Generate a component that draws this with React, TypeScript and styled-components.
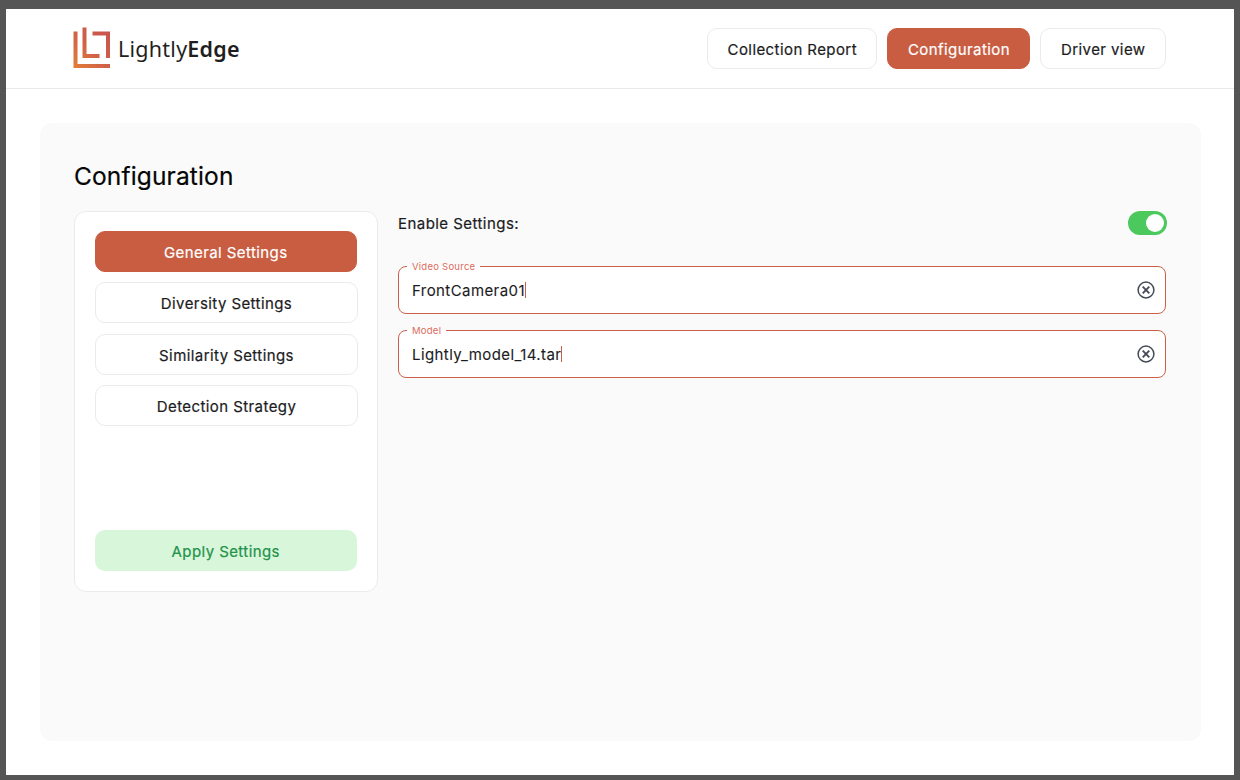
import styled, { createGlobalStyle } from "styled-components";

const navItems = ["Collection Report", "Configuration", "Driver view"];
const settingsItems = [
  "General Settings",
  "Diversity Settings",
  "Similarity Settings",
  "Detection Strategy",
];
const fields = [
  { label: "Video Source", value: "FrontCamera01" },
  { label: "Model", value: "Lightly_model_14.tar" },
];

function Logo() {
  return (
    <svg width="38" height="42" viewBox="0 0 38 42" fill="none">
      <defs>
        <linearGradient id="logoFill" x1="0" y1="1" x2="1" y2="0">
          <stop offset="0" stopColor="#e47f36" />
          <stop offset="0.5" stopColor="#cf5f48" />
          <stop offset="1" stopColor="#c9524e" />
        </linearGradient>
      </defs>
      <path
        d="M0.5 4.5H4.5V37H37V41H0.5ZM9.5 0.5H13.5V27H26.5V31H9.5ZM19.5 4.5H37V31H33V8.5H19.5Z"
        fill="url(#logoFill)"
      />
    </svg>
  );
}

function ClearIcon() {
  return (
    <svg width="18" height="18" viewBox="0 0 18 18" fill="none" stroke="#454b57">
      <circle cx="9" cy="9" r="7.9" strokeWidth="1.5" />
      <path d="M5.7 5.7L12.3 12.3M12.3 5.7L5.7 12.3" strokeWidth="1.9" />
    </svg>
  );
}

export default function App() {
  return (
    <Frame>
      <GlobalStyle />
      <Page>
        <Header>
          <Brand>
            <Logo />
            <BrandName>
              Lightly<strong>Edge</strong>
            </BrandName>
          </Brand>
          <Nav>
            {navItems.map((item) => (
              <NavButton key={item} $active={item === "Configuration"}>
                {item}
              </NavButton>
            ))}
          </Nav>
        </Header>
        <Main>
          <Panel>
            <Title>Configuration</Title>
            <Columns>
              <Sidebar>
                <SettingsList>
                  {settingsItems.map((item) => (
                    <SettingsButton key={item} $active={item === "General Settings"}>
                      {item}
                    </SettingsButton>
                  ))}
                </SettingsList>
                <ApplyButton>Apply Settings</ApplyButton>
              </Sidebar>
              <Content>
                <EnableRow>
                  <EnableLabel>Enable Settings:</EnableLabel>
                  <Toggle>
                    <Knob />
                  </Toggle>
                </EnableRow>
                <FieldList>
                  {fields.map((field) => (
                    <Field key={field.label}>
                      <Legend>{field.label}</Legend>
                      <FieldValue>
                        {field.value}
                        <Caret />
                      </FieldValue>
                      <ClearIcon />
                    </Field>
                  ))}
                </FieldList>
              </Content>
            </Columns>
          </Panel>
        </Main>
      </Page>
    </Frame>
  );
}

const GlobalStyle = createGlobalStyle`
  html, body {
    margin: 0;
    height: 100%;
    background: #555555;
  }
  * {
    box-sizing: border-box;
  }
  body {
    font-family: Inter, "Liberation Sans", sans-serif;
    color: #1c1c1e;
  }
`;

const Frame = styled.div`
  height: 780px;
  padding: 9px 6px 5px;
  background: #555555;
`;

const Page = styled.div`
  display: flex;
  flex-direction: column;
  height: 100%;
  background: #ffffff;
`;

const Header = styled.header`
  display: flex;
  align-items: center;
  justify-content: space-between;
  flex: 0 0 80px;
  padding: 0 68px 1px 67px;
  border-bottom: 1px solid #e8e8e8;
`;

const Brand = styled.div`
  display: flex;
  align-items: center;
  gap: 7px;
`;

const BrandName = styled.span`
  font-family: "Noto Sans", sans-serif;
  font-size: 21.5px;
  letter-spacing: 0.25px;
  color: #1f1f22;

  strong {
    font-weight: 600;
  }
`;

const Nav = styled.nav`
  display: flex;
  gap: 10px;
`;

const NavButton = styled.button<{ $active?: boolean }>`
  height: 41px;
  padding: 2px 19.5px 0;
  border: 1px solid ${(p) => (p.$active ? "#c95d41" : "#ebebeb")};
  border-radius: 10px;
  background: ${(p) => (p.$active ? "#c95d41" : "#ffffff")};
  color: ${(p) => (p.$active ? "#ffffff" : "#1c1c1e")};
  font-family: inherit;
  font-size: 15px;
  font-weight: 400;
  letter-spacing: 0.42px;
  -webkit-text-stroke: 0.2px currentColor;
`;

const Main = styled.main`
  flex: 1;
  display: flex;
  padding: 34px 33px 34px 34px;
`;

const Panel = styled.section`
  flex: 1;
  padding: 34px 35px 34px 34px;
  border-radius: 12px;
  background: #fafafa;
`;

const Title = styled.h1`
  margin: 0 0 17px;
  height: 37px;
  font-size: 24.5px;
  line-height: 39px;
  font-weight: 400;
  letter-spacing: 0.14px;
  color: #050505;
  -webkit-text-stroke: 0.2px currentColor;
`;

const Columns = styled.div`
  display: flex;
  align-items: flex-start;
  gap: 20px;
`;

const Sidebar = styled.aside`
  display: flex;
  flex-direction: column;
  justify-content: space-between;
  flex: 0 0 304px;
  height: 381px;
  padding: 19px 19px 20px 19.5px;
  border: 1px solid #ebebeb;
  border-radius: 12px;
  background: #ffffff;
`;

const SettingsList = styled.div`
  display: flex;
  flex-direction: column;
  gap: 10.4px;
`;

const SettingsButton = styled.button<{ $active?: boolean }>`
  height: 41px;
  margin: ${(p) => (p.$active ? "0 1px 0 0" : "0 0 0 0.5px")};
  padding-top: 3px;
  border: 1px solid ${(p) => (p.$active ? "#c95d41" : "#ebebeb")};
  border-radius: 10px;
  background: ${(p) => (p.$active ? "#c95d41" : "#ffffff")};
  color: ${(p) => (p.$active ? "#ffffff" : "#1c1c1e")};
  font-family: inherit;
  font-size: 15px;
  font-weight: 400;
  letter-spacing: 0.42px;
  -webkit-text-stroke: 0.2px currentColor;
`;

const ApplyButton = styled.button`
  height: 41px;
  margin-right: 1px;
  padding-top: 2px;
  border: none;
  border-radius: 10px;
  background: #d7f6da;
  color: #24924a;
  font-family: inherit;
  font-size: 15px;
  font-weight: 400;
  letter-spacing: 0.42px;
  -webkit-text-stroke: 0.2px currentColor;
`;

const Content = styled.div`
  flex: 1;
  min-width: 0;
`;

const EnableRow = styled.div`
  display: flex;
  align-items: center;
  justify-content: space-between;
  height: 23px;
  margin-bottom: 32px;
`;

const EnableLabel = styled.span`
  padding-top: 2px;
  font-size: 15px;
  font-weight: 400;
  letter-spacing: 0.45px;
  -webkit-text-stroke: 0.2px currentColor;
`;

const Toggle = styled.div`
  display: flex;
  align-items: center;
  justify-content: flex-end;
  flex: none;
  width: 39px;
  height: 24px;
  margin-right: -1px;
  padding-right: 3px;
  border-radius: 12px;
  background: #4bc95c;
`;

const Knob = styled.div`
  width: 18px;
  height: 18px;
  border-radius: 50%;
  background: #ffffff;
`;

const FieldList = styled.div`
  display: flex;
  flex-direction: column;
  gap: 16px;
`;

const Field = styled.div`
  position: relative;
  display: flex;
  align-items: center;
  justify-content: space-between;
  height: 48px;
  padding: 0 10px 0 13px;
  border: 1px solid #cb6048;
  border-radius: 8px;
  background: #ffffff;
`;

const Legend = styled.span`
  position: absolute;
  top: -6px;
  left: 8px;
  padding: 0 5px;
  background: linear-gradient(#fafafa 50%, #ffffff 50%);
  font-size: 9.5px;
  line-height: 11px;
  color: #dd6a5e;
  letter-spacing: 0.25px;
`;

const FieldValue = styled.span`
  display: flex;
  align-items: center;
  font-size: 15px;
  letter-spacing: 0.42px;
  color: #1c1c1e;
  -webkit-text-stroke: 0.1px currentColor;
`;

const Caret = styled.i`
  width: 1px;
  height: 16px;
  background: #cb6048;
`;
